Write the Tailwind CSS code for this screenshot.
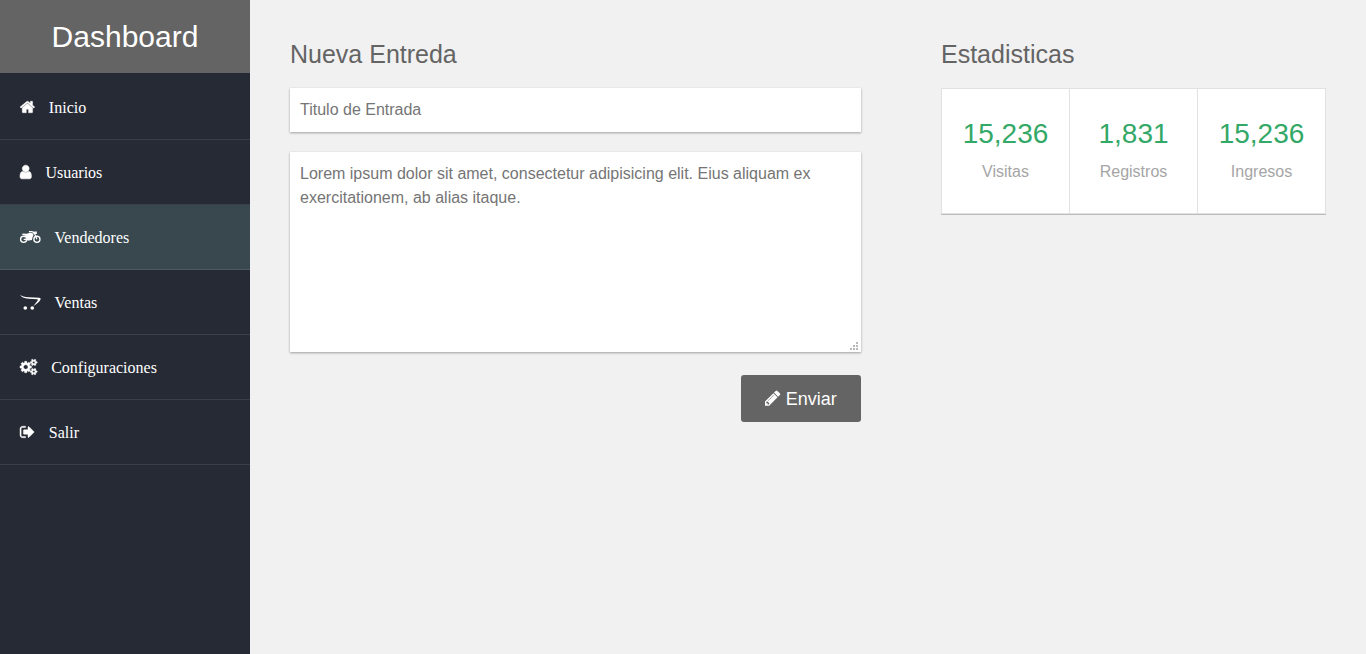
<!DOCTYPE html>
<html lang="es">
<head>
<meta charset="utf-8">
<title>Dashboard</title>
<script src="https://cdn.jsdelivr.net/npm/@tailwindcss/browser@4"></script>
</head>
<body class="flex h-screen overflow-hidden bg-[#f1f1f1] font-['Liberation_Sans',Arial,sans-serif] text-base">
<aside class="w-[250px] shrink-0 bg-[#262a34]">
  <h1 class="flex h-[73px] items-center justify-center bg-[#646464] text-[30px] leading-[33px] text-white">Dashboard</h1>
  <nav class="font-['Liberation_Serif','Times_New_Roman',serif] text-base text-white">
    <a class="flex h-[67px] items-center gap-[14px] border-b border-[#3b3f48] px-5 pt-0.5"><svg class="h-4 w-[14.86px] overflow-visible fill-white stroke-white stroke-[50]" viewBox="64 0 1664 1792"><path d="M1472 992v480q0 26-19 45t-45 19h-384v-384h-256v384h-384q-26 0-45-19t-19-45v-480q0-1 .5-3t.5-3l575-474 575 474q1 2 1 6zm223-69l-62 74q-8 9-21 11h-3q-13 0-21-7l-692-577-692 577q-12 8-24 7-13-2-21-11l-62-74q-8-10-7-23.5t11-21.5l719-599q32-26 76-26t76 26l244 204v-195q0-14 9-23t23-9h192q14 0 23 9t9 23v408l219 182q10 8 11 21.5t-7 23.5z"/></svg><span class="pt-0.5">Inicio</span></a>
    <a class="flex h-[65px] items-center gap-[14px] border-b border-[#3b3f48] px-5"><svg class="h-4 w-[11.43px] overflow-visible fill-white stroke-white stroke-[60]" viewBox="256 0 1280 1792"><path d="M1536 1399q0 109-62.5 187t-150.5 78h-854q-88 0-150.5-78t-62.5-187q0-85 8.5-160.5t31.5-152 58.5-131 94-89 134.5-34.5q131 128 313 128t313-128q76 0 134.5 34.5t94 89 58.5 131 31.5 152 8.5 160.5zm-256-887q0 159-112.5 271.5t-271.5 112.5-271.5-112.5-112.5-271.5 112.5-271.5 271.5-112.5 271.5 112.5 112.5 271.5z"/></svg><span class="pt-0.5">Usuarios</span></a>
    <a class="flex h-[65px] items-center gap-[14px] border-b border-[#4b5a60] bg-[#39484f] px-5"><svg class="h-4 w-[20.57px] overflow-visible" viewBox="0 0 62 48" fill="none" stroke="#fff"><circle cx="11" cy="31" r="9.2" stroke-width="4"/><circle cx="51" cy="31" r="9.2" stroke-width="4"/><path d="M4 15q6-3 13-1 5 1 8-1 6-3 13 0l3 5-3 6-2 9-13 2-3-6q-1-10-9-10z" fill="#fff" stroke="none"/><path d="M11 31h14M27 8h9q6 0 9 8l6 15M39 13l6-4h4v4h-5" stroke-width="3.6"/></svg><span class="pt-0.5">Vendedores</span></a>
    <a class="flex h-[65px] items-center gap-[14px] border-b border-[#3b3f48] px-5"><svg class="h-4 w-[20.57px] fill-white" viewBox="0 0 62 48"><path d="M0 2q8 7 26 8 18 0 32 1 7 1 3 7-5 8-21 19 8-11 13-17 3-4-2-4-10-1-25-2Q5 13 0 2z"/><circle cx="16" cy="42" r="5.5"/><circle cx="37" cy="42" r="5.5"/></svg><span class="pt-0.5">Ventas</span></a>
    <a class="flex h-[65px] items-center gap-[14px] border-b border-[#3b3f48] px-5"><svg class="h-4 w-[17.14px] overflow-visible fill-white stroke-white stroke-[50]" viewBox="-64 0 1920 1792"><path d="M832 896q0-106-75-181t-181-75-181 75-75 181 75 181 181 75 181-75 75-181zm768 512q0-52-38-90t-90-38-90 38-38 90q0 53 37.5 90.5t90.5 37.5 90.5-37.5 37.5-90.5zm0-1024q0-52-38-90t-90-38-90 38-38 90q0 53 37.5 90.5t90.5 37.5 90.5-37.5 37.5-90.5zm-384 421v185q0 10-7 19.5t-16 10.5l-155 24q-11 35-32 76 34 48 90 115 7 11 7 20 0 12-7 19-23 30-82.5 89.5t-78.5 59.5q-11 0-21-7l-115-90q-37 19-77 31-11 108-23 155-7 24-30 24h-186q-11 0-20-7.5t-10-17.5l-23-153q-34-10-75-31l-118 89q-7 7-20 7-11 0-21-8-144-133-144-160 0-9 7-19 10-14 41-53t47-61q-23-44-35-82l-152-24q-10-1-17-9.5t-7-19.5v-185q0-10 7-19.5t16-10.5l155-24q11-35 32-76-34-48-90-115-7-11-7-20 0-12 7-20 22-30 82-89t79-59q11 0 21 7l115 90q34-18 77-32 11-108 23-154 7-24 30-24h186q11 0 20 7.5t10 17.5l23 153q34 10 75 31l118-89q8-7 20-7 11 0 21 8 144 133 144 160 0 8-7 19-12 16-42 54t-45 60q23 48 34 82l152 23q10 2 17 10.5t7 19.5zm640 533v140q0 16-149 31-12 27-30 52 51 113 51 138 0 4-4 7-122 71-124 71-8 0-46-47t-52-68q-20 2-30 2t-30-2q-14 21-52 68t-46 47q-2 0-124-71-4-3-4-7 0-25 51-138-18-25-30-52-149-15-149-31v-140q0-16 149-31 13-29 30-52-51-113-51-138 0-4 4-7 4-2 35-20t59-34 30-16q8 0 46 46.5t52 67.5q20-2 30-2t30 2q51-71 92-112l6-2q4 0 124 70 4 3 4 7 0 25-51 138 17 23 30 52 149 15 149 31zm0-1024v140q0 16-149 31-12 27-30 52 51 113 51 138 0 4-4 7-122 71-124 71-8 0-46-47t-52-68q-20 2-30 2t-30-2q-14 21-52 68t-46 47q-2 0-124-71-4-3-4-7 0-25 51-138-18-25-30-52-149-15-149-31v-140q0-16 149-31 13-29 30-52-51-113-51-138 0-4 4-7 4-2 35-20t59-34 30-16q8 0 46 46.5t52 67.5q20-2 30-2t30 2q51-71 92-112l6-2q4 0 124 70 4 3 4 7 0 25-51 138 17 23 30 52 149 15 149 31z"/></svg><span class="pt-0.5">Configuraciones</span></a>
    <a class="flex h-[65px] items-center gap-[14px] border-b border-[#3b3f48] px-5"><svg class="h-4 w-[14.86px] overflow-visible fill-white stroke-white stroke-[50]" viewBox="64 0 1664 1792"><path d="M704 1440q0 4 1 20t.5 26.5-3 23.5-10 19.5-20.5 6.5h-320q-119 0-203.5-84.5t-84.5-203.5v-704q0-119 84.5-203.5t203.5-84.5h320q13 0 22.5 9.5t9.5 22.5q0 4 1 20t.5 26.5-3 23.5-10 19.5-20.5 6.5h-320q-66 0-113 47t-47 113v704q0 66 47 113t113 47h312l11.5 1 11.5 3 8 5.5 7 9 2 13.5zm928-544q0 26-19 45l-544 544q-19 19-45 19t-45-19-19-45v-288h-448q-26 0-45-19t-19-45v-384q0-26 19-45t45-19h448v-288q0-26 19-45t45-19 45 19l544 544q19 19 19 45z"/></svg><span class="pt-0.5">Salir</span></a>
  </nav>
</aside>
<main class="flex flex-1 justify-between p-10">
  <section class="flex w-[571px] flex-col">
    <h2 class="mb-[19px] text-[25px] leading-[29px] text-[#646464]">Nueva Entreda</h2>
    <input class="mb-5 h-11 bg-white px-2.5 shadow-[0_1px_3px_rgba(0,0,0,0.12),0_1px_2px_rgba(0,0,0,0.24)] outline-none placeholder:text-[#757575]" placeholder="Titulo de Entrada">
    <div class="relative h-[200px]">
      <textarea class="block size-full resize-none bg-white p-2.5 leading-6 shadow-[0_1px_3px_rgba(0,0,0,0.12),0_1px_2px_rgba(0,0,0,0.24)] outline-none placeholder:text-[#757575]" placeholder="Lorem ipsum dolor sit amet, consectetur adipisicing elit. Eius aliquam ex exercitationem, ab alias itaque."></textarea>
      <svg class="absolute right-[3px] bottom-[2px] size-2 fill-[#bababa]" viewBox="0 0 8 8"><path d="M6 0h2v2H6zM3 3h2v2H3zM6 3h2v2H6zM0 6h2v2H0zM3 6h2v2H3zM6 6h2v2H6z"/></svg>
    </div>
    <button class="mt-[23px] flex h-[47px] w-[120px] items-center justify-center gap-[5px] self-end rounded-[3px] bg-[#646464] text-lg text-white"><svg class="mb-px h-[18px] w-[15.43px] fill-white" viewBox="128 0 1536 1792"><path d="M491 1536l91-91-235-235-91 91v107h128v128h107zm523-928q0-22-22-22-10 0-17 7l-542 542q-7 7-7 17 0 22 22 22 10 0 17-7l542-542q7-7 7-17zm-54-192l416 416-832 832h-416v-416zm683 96q0 53-37 90l-166 166-416-416 166-165q36-38 90-38 53 0 91 38l235 234q37 39 37 91z"/></svg><span>Enviar</span></button>
  </section>
  <section class="w-[385px]">
    <h2 class="mb-[19px] text-[25px] leading-[29px] text-[#646464]">Estadisticas</h2>
    <div class="flex h-[126px] divide-x divide-[#e1e1e1] border border-[#e1e1e1] bg-white text-center shadow-[0_1px_0_#bdbdbd]">
      <div class="flex-1 pt-[29px]"><p class="text-[28px] leading-8 text-[#34a867]">15,236</p><p class="mt-2.5 leading-6 text-[#a5a5a5]">Visitas</p></div>
      <div class="flex-1 pt-[29px]"><p class="text-[28px] leading-8 text-[#34a867]">1,831</p><p class="mt-2.5 leading-6 text-[#a5a5a5]">Registros</p></div>
      <div class="flex-1 pt-[29px]"><p class="text-[28px] leading-8 text-[#34a867]">15,236</p><p class="mt-2.5 leading-6 text-[#a5a5a5]">Ingresos</p></div>
    </div>
  </section>
</main>
</body>
</html>
